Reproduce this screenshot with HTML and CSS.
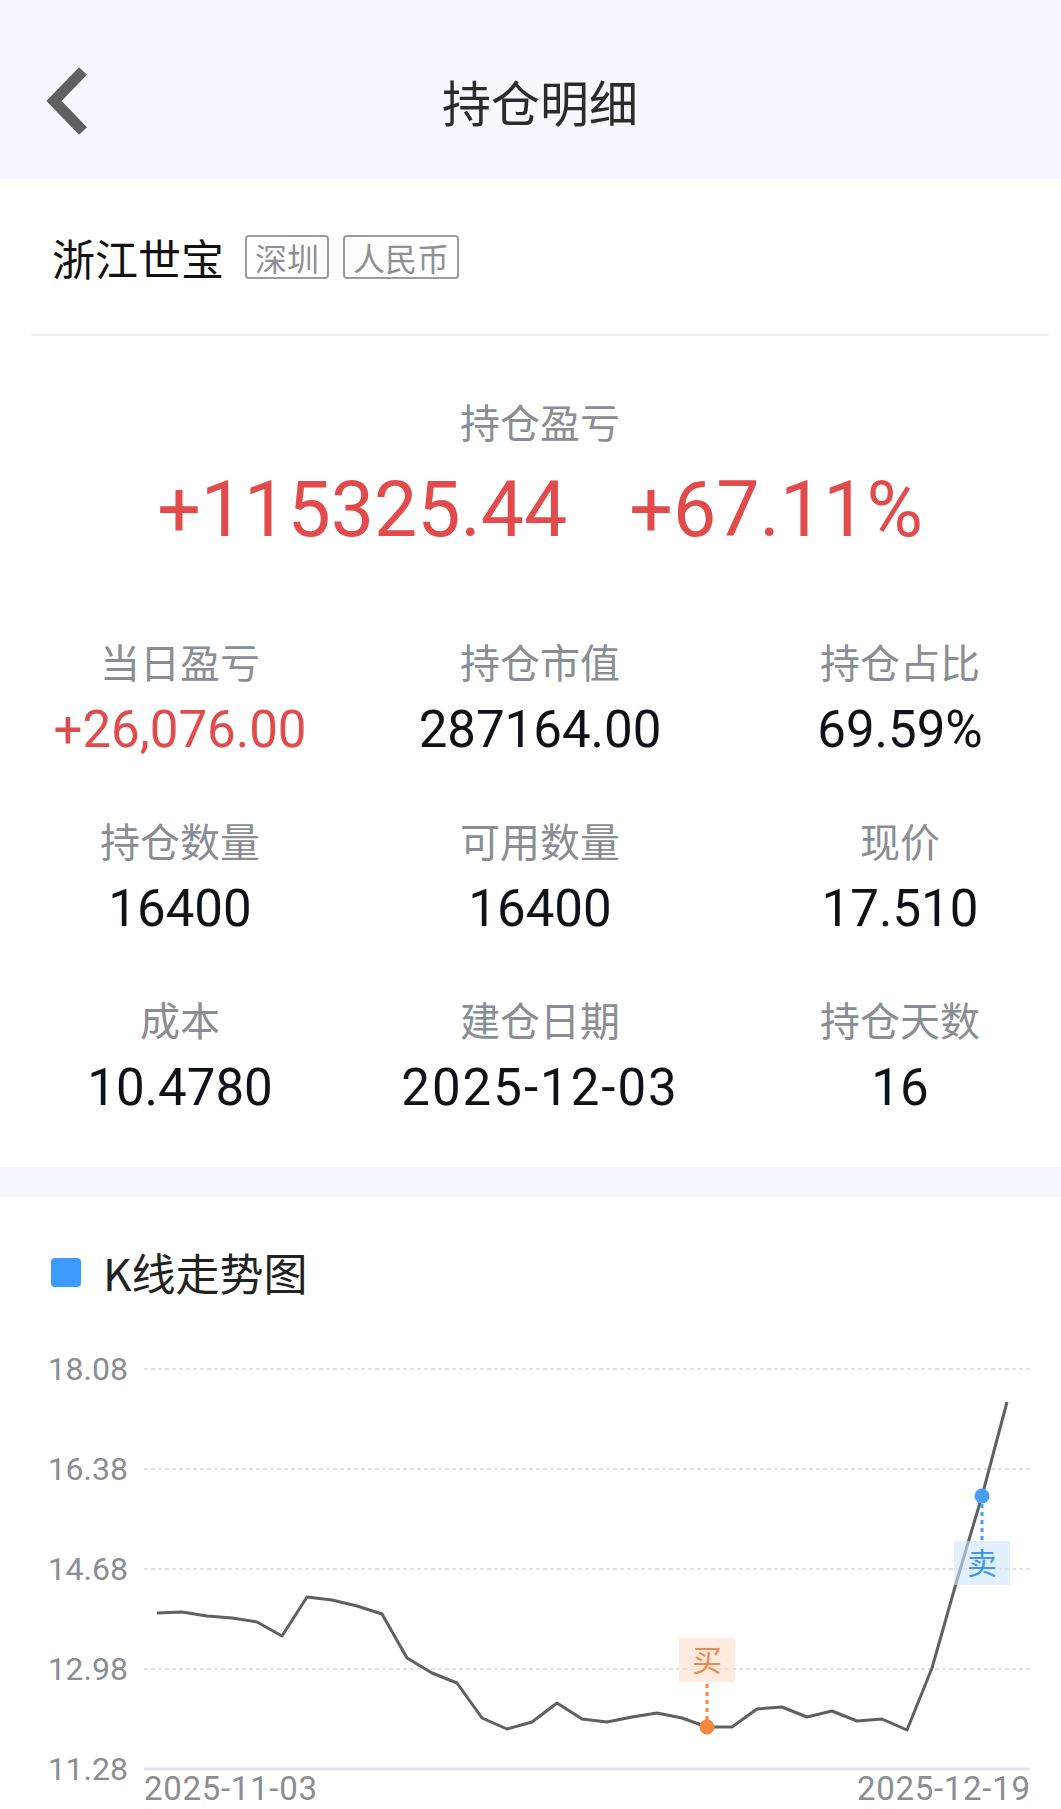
FILE: index.html
```html
<!DOCTYPE html>
<html lang="zh-CN">
<head>
    <meta charset="UTF-8">
    <meta name="viewport" content="width=device-width, initial-scale=1.0">
    <title>持仓明细</title>
    <link rel="stylesheet" href="styles.css">
</head>
<body>
<div class="page">
    <!-- Top bar -->
    <header class="topbar">
        <a class="back" href="#" aria-label="返回">
            <svg width="50" height="80" viewBox="0 0 50 80">
                <polyline points="38,10 9,40 38,70" fill="none" stroke="#5f6062" stroke-width="11"/>
            </svg>
        </a>
        <h1 class="title">持仓明细</h1>
        <span></span>
    </header>

    <!-- Stock name -->
    <div class="stock">
        <span class="stock-name">浙江世宝</span>
        <span class="tag">深圳</span>
        <span class="tag">人民币</span>
    </div>
    <div class="divider"></div>

    <!-- Profit summary -->
    <section class="summary">
        <div class="summary-label">持仓盈亏</div>
        <div class="summary-value">
            <span>+115325.44</span>
            <span>+67.11%</span>
        </div>

        <div class="stats">
            <div class="stat">
                <div class="stat-label">当日盈亏</div>
                <div class="stat-value up">+26,076.00</div>
            </div>
            <div class="stat">
                <div class="stat-label">持仓市值</div>
                <div class="stat-value">287164.00</div>
            </div>
            <div class="stat">
                <div class="stat-label">持仓占比</div>
                <div class="stat-value">69.59%</div>
            </div>
            <div class="stat">
                <div class="stat-label">持仓数量</div>
                <div class="stat-value">16400</div>
            </div>
            <div class="stat">
                <div class="stat-label">可用数量</div>
                <div class="stat-value">16400</div>
            </div>
            <div class="stat">
                <div class="stat-label">现价</div>
                <div class="stat-value">17.510</div>
            </div>
            <div class="stat">
                <div class="stat-label">成本</div>
                <div class="stat-value">10.4780</div>
            </div>
            <div class="stat">
                <div class="stat-label">建仓日期</div>
                <div class="stat-value date">2025-12-03</div>
            </div>
            <div class="stat">
                <div class="stat-label">持仓天数</div>
                <div class="stat-value">16</div>
            </div>
        </div>
    </section>

    <div class="gap-band"></div>

    <!-- K line chart -->
    <section class="chart">
        <h2 class="chart-title"><span class="mark"></span>K线走势图</h2>
        <svg class="chart-svg" width="1080" height="509" viewBox="0 0 1080 509">
            <g stroke="#d8d9dc" stroke-width="1.5" stroke-dasharray="4 3">
                <line x1="144" y1="69" x2="1030" y2="69"/>
                <line x1="144" y1="169" x2="1030" y2="169"/>
                <line x1="144" y1="269" x2="1030" y2="269"/>
                <line x1="144" y1="369" x2="1030" y2="369"/>
            </g>
            <line x1="144" y1="469" x2="1030" y2="469" stroke="#e2e4e9" stroke-width="3"/>

            <g class="axis-y" text-anchor="end">
                <text x="128" y="80">18.08</text>
                <text x="128" y="180">16.38</text>
                <text x="128" y="280">14.68</text>
                <text x="128" y="380">12.98</text>
                <text x="128" y="480">11.28</text>
            </g>
            <g class="axis-x">
                <text x="144" y="500" textLength="173">2025-11-03</text>
                <text x="857" y="500" textLength="173">2025-12-19</text>
            </g>

            <polyline fill="none" stroke="#5d6164" stroke-width="3" stroke-linejoin="round"
                points="157,313 182,312 207,316 232,318 257,322 282,336 307,297 332,300 357,306 382,314
                        407,358 432,373 457,383 482,418 507,429 532,422 557,403 582,419 607,422 632,417
                        657,413 682,418 707,427 732,427 757,409 782,407 807,417 832,411 857,421 882,419
                        907,430 932,368 957,280 982,196 1007,102"/>

            <!-- buy point -->
            <line x1="707" y1="420" x2="707" y2="384" stroke="#f5873f" stroke-width="3" stroke-dasharray="4 4"/>
            <rect x="679" y="338" width="56" height="44" fill="#fde2d3" opacity="0.7"/>
            <text class="mark-text" x="707" y="371" fill="#f08a4b">买</text>
            <circle cx="707" cy="427" r="7.5" fill="#f5873f"/>

            <!-- sell point -->
            <line x1="982" y1="204" x2="982" y2="240" stroke="#4a9ff5" stroke-width="3" stroke-dasharray="4 4"/>
            <rect x="954" y="241" width="56" height="44" fill="#cfe4fb" opacity="0.6"/>
            <text class="mark-text" x="982" y="274" fill="#3f97ef">卖</text>
            <circle cx="982" cy="196" r="7.5" fill="#4a9ff5"/>
        </svg>
    </section>
</div>
</body>
</html>
```

FILE: styles.css
```css
/* General Reset */
* {
    margin: 0;
    padding: 0;
    box-sizing: border-box;
}

body {
    font-family: "Noto Sans CJK SC", "Noto Sans", sans-serif;
    background-color: #ffffff;
    color: #111111;
    overflow: hidden;
}

.page {
    width: 1080px;
    height: 1809px;
    overflow: hidden;
}

/* Top bar */
.topbar {
    display: grid;
    grid-template-columns: 1fr auto 1fr;
    align-items: center;
    height: 179px;
    padding-top: 22px;
    background-color: #f5f9ff;
}

.back {
    display: flex;
    padding-left: 45px;
}

.title {
    font-size: 49px;
    font-weight: 400;
    color: #2b2b2b;
    line-height: 60px;
}

/* Stock row */
.stock {
    display: flex;
    align-items: center;
    height: 155px;
    padding-left: 52px;
}

.stock-name {
    font-size: 43px;
    color: #111111;
    margin-right: 21px;
}

.tag {
    font-size: 32px;
    line-height: 40px;
    color: #8e9095;
    border: 2px solid #9a9ca0;
    border-radius: 4px;
    padding: 0 8px;
    margin-right: 14px;
}

.divider {
    height: 2px;
    margin: 0 31px;
    background-color: #eeeff2;
}

/* Summary */
.summary {
    text-align: center;
    padding-bottom: 49px;
}

.summary-label {
    margin-top: 57px;
    font-size: 40px;
    line-height: 56px;
    color: #8a8d93;
}

.summary-value {
    display: flex;
    justify-content: center;
    gap: 62px;
    margin-top: 16px;
    font-family: Roboto, "Liberation Sans", sans-serif;
    font-size: 77px;
    line-height: 90px;
    color: #e14b4b;
}

.stats {
    display: grid;
    grid-template-columns: repeat(3, 1fr);
    row-gap: 52px;
    margin-top: 78px;
}

.stat {
    display: flex;
    flex-direction: column;
    align-items: center;
    gap: 11px;
}

.stat-label {
    font-size: 40px;
    line-height: 56px;
    color: #8a8d93;
}

.stat-value {
    font-family: Roboto, "Liberation Sans", sans-serif;
    font-size: 51px;
    line-height: 60px;
    color: #0e1116;
}

.stat-value.up {
    color: #e14b4b;
}

.stat-value.date {
    letter-spacing: 2px;
}

.gap-band {
    height: 30px;
    background-color: #f5f9ff;
}

/* Chart */
.chart {
    padding-top: 47px;
}

.chart-title {
    display: flex;
    align-items: center;
    gap: 22px;
    padding-left: 51px;
    font-size: 44px;
    font-weight: 400;
    line-height: 56px;
    color: #222222;
}

.mark {
    width: 30px;
    height: 29px;
    border-radius: 4px;
    background-color: #3d9bff;
}

.chart-svg {
    display: block;
}

.axis-y text {
    font-family: Roboto, "Liberation Sans", sans-serif;
    font-size: 32px;
    fill: #8a8d93;
}

.axis-x text {
    font-family: Roboto, "Liberation Sans", sans-serif;
    font-size: 33px;
    fill: #8a8d93;
}

.mark-text {
    font-family: "Noto Sans CJK SC", sans-serif;
    font-size: 30px;
    text-anchor: middle;
}
```
